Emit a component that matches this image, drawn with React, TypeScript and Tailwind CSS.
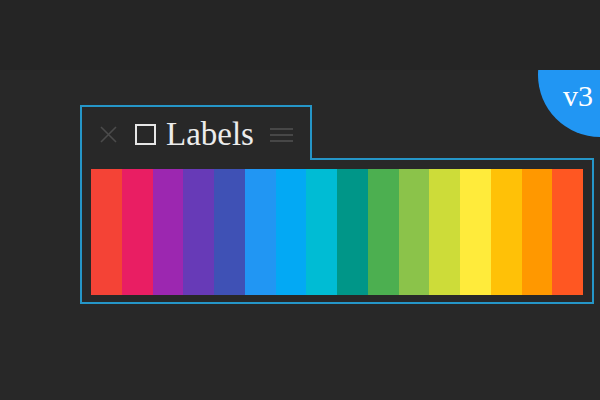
import React from 'react';

const swatches = [
    '#f44336', '#e91e63', '#9c27b0', '#673ab7',
    '#3f51b5', '#2196f3', '#03a9f4', '#00bcd4',
    '#009688', '#4caf50', '#8bc34a', '#cddc39',
    '#ffeb3b', '#ffc107', '#ff9800', '#ff5722',
];

const App: React.FC = () => {
    return (
        <div className="w-[600px] h-[400px] bg-[#282828] overflow-hidden">
            <div className="h-[70px] bg-[#252525]" />
            <div className="relative h-[330px] overflow-hidden">
                {/* version badge */}
                <div className="absolute left-[538px] top-[-57px] w-[124px] h-[124px] rounded-full bg-[#2196f3]" />
                <span className="absolute left-[563px] top-[11px] text-[30px] leading-none text-white font-['Liberation_Serif',serif]">
                    v3
                </span>

                <div className="pt-[35px] pl-[80px]">
                    <div className="relative z-10 flex items-center w-[232px] h-[55px] pt-[2px] pl-[18px] border-2 border-b-0 border-[#2596c8] bg-[#282828]">
                        <svg width="17" height="17" viewBox="0 0 17 17" className="shrink-0">
                            <path d="M1 1L16 16M16 1L1 16" stroke="#4b4b4b" strokeWidth="1.6" />
                        </svg>
                        <div className="ml-[18px] w-[21px] h-[21px] border-2 border-[#e6e6e6] shrink-0" />
                        <span className="ml-[10px] text-[33px] leading-none text-[#ececec] font-['Liberation_Serif',serif]">
                            Labels
                        </span>
                        <div className="ml-[16px] flex flex-col gap-[4px]">
                            <div className="w-[23px] h-[2px] bg-[#474747]" />
                            <div className="w-[23px] h-[2px] bg-[#474747]" />
                            <div className="w-[23px] h-[2px] bg-[#474747]" />
                        </div>
                    </div>
                    <div className="-mt-[2px] w-[514px] h-[146px] border-2 border-[#2596c8] p-[7px] pt-[9px] pl-[9px]">
                        <div className="flex w-[492px] h-[126px]">
                            {swatches.map((c) => (
                                <div key={c} className="flex-1" style={{ backgroundColor: c }} />
                            ))}
                        </div>
                    </div>
                </div>
            </div>
        </div>
    );
};

export default App;
